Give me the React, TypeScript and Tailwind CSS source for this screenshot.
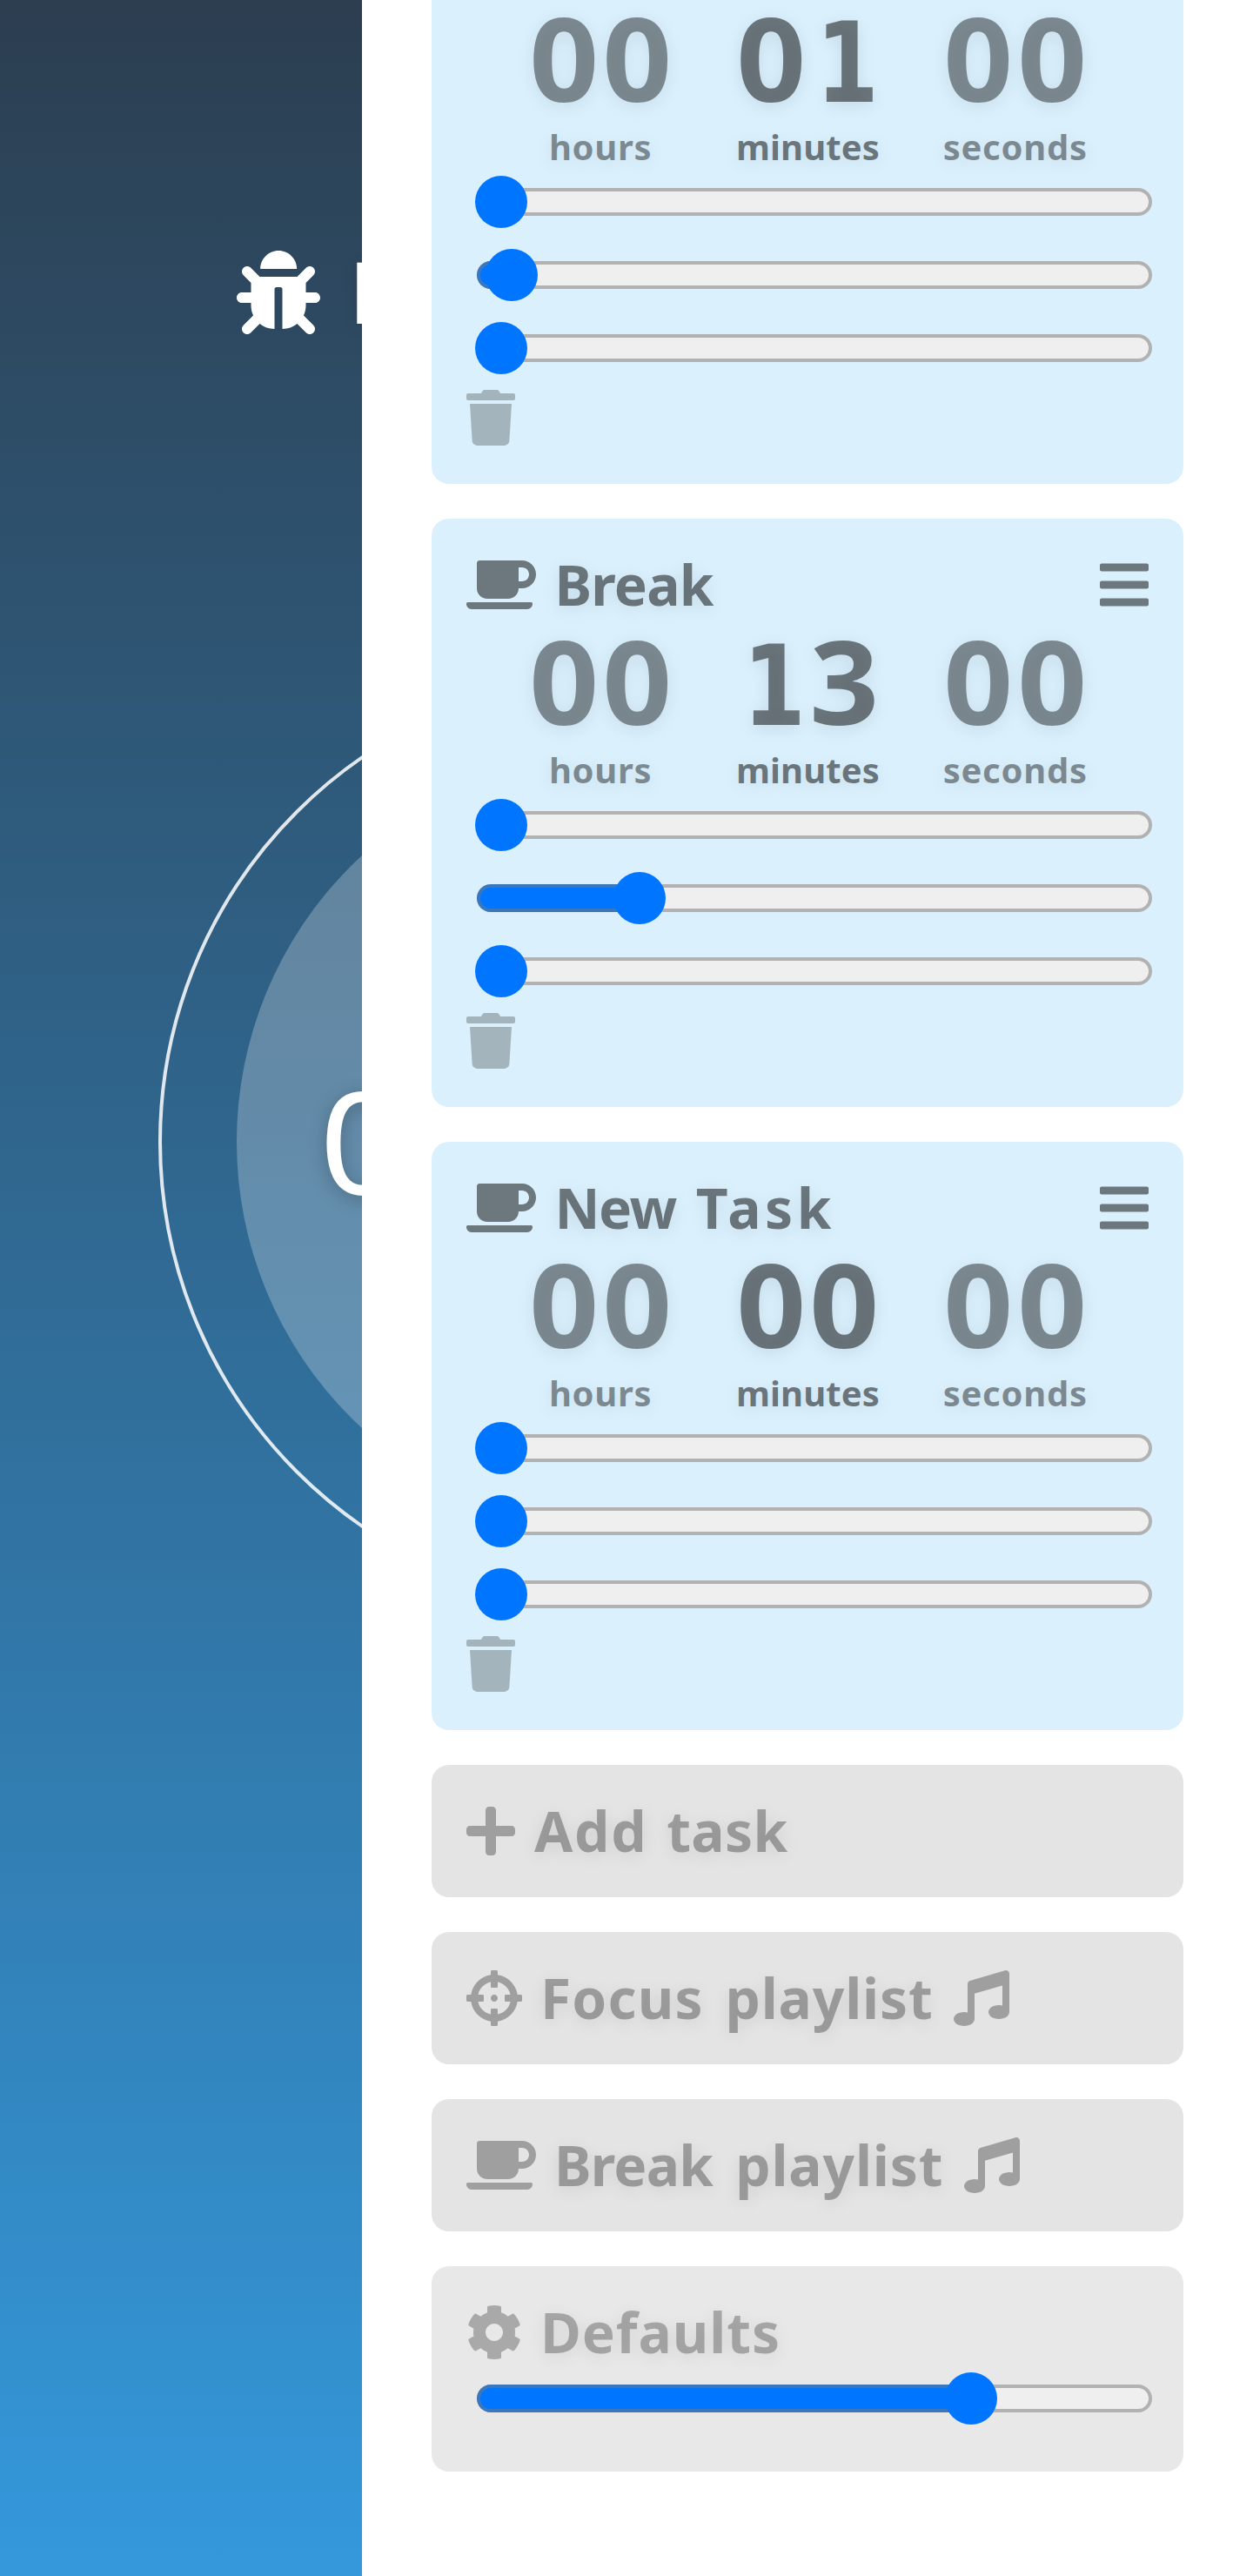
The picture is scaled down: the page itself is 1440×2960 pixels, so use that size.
import React from "react";
import { FaBars, FaBug, FaCoffee, FaCog, FaCrosshairs, FaMusic, FaPlus, FaTrash } from "react-icons/fa";

const shadow = "[text-shadow:0_4px_20px_rgba(0,0,0,0.09)]";

function Slider({ value }: { value: number }) {
  const center = 30 + value * 720;
  return (
    <div className="relative ml-[10px] flex h-[60px] w-[780px] items-center">
      <div className="ml-0.5 h-8 w-[776px] shrink-0 rounded-full border-4 border-[#b2b2b2] bg-[#efefef]" />
      {value > 0 && (
        <div
          className="absolute left-0.5 top-[14px] h-8 rounded-l-full border-4 border-r-0 border-[#3b77bd] bg-[#0075ff]"
          style={{ width: center - 2 }}
        />
      )}
      <div className="absolute top-0 size-[60px] rounded-full bg-[#0075ff]" style={{ left: center - 30 }} />
    </div>
  );
}

function Digit({ char }: { char: string }) {
  const face =
    char === "1"
      ? "font-['DejaVu_Sans_Condensed','DejaVu_Sans',sans-serif] text-[128px] scale-x-90 pl-[6px]"
      : "text-[132px] scale-x-[1.06]";
  return <span className={`w-[84.6px] text-center font-bold leading-[117px] ${face} ${shadow}`}>{char}</span>;
}

function Unit({ value, label, tracking, dim }: { value: string; label: string; tracking: string; dim?: boolean }) {
  return (
    <div className={`flex w-[238.3px] flex-col items-center text-black/50 ${dim ? "opacity-[0.83]" : ""}`}>
      <div className="flex h-32 items-baseline">
        {value.split("").map((char, i) => (
          <Digit key={i} char={char} />
        ))}
      </div>
      <span className={`mt-[13px] h-[39px] text-[40px] font-bold leading-10 ${tracking} ${shadow}`}>{label}</span>
    </div>
  );
}

function TimeEditor({ minutes, fraction }: { minutes: string; fraction: number }) {
  return (
    <>
      <div className="flex pl-[35px]">
        <Unit value="00" label="hours" tracking="tracking-[0.7px]" dim />
        <Unit value={minutes} label="minutes" tracking="tracking-[0.1px]" />
        <Unit value="00" label="seconds" tracking="tracking-[0.75px]" dim />
      </div>
      <div className="mt-[14px] flex flex-col gap-6">
        <Slider value={0} />
        <Slider value={fraction} />
        <Slider value={0} />
      </div>
      <FaTrash className="mt-[18px] h-16 w-14 text-black/25" />
    </>
  );
}

type Word = { text: string; className: string };

function Title({ words }: { words: Word[] }) {
  return (
    <h2 className={`flex h-16 items-start text-[64px] font-bold leading-[64px] ${shadow}`}>
      {words.map((w) => (
        <span key={w.text} className={w.className}>
          {w.text}
        </span>
      ))}
    </h2>
  );
}

function TaskCard({ title, minutes, fraction }: { title: Word[]; minutes: string; fraction: number }) {
  return (
    <section className="h-[676px] rounded-[20px] bg-[#daf0fd] px-10 pt-11">
      <div className="flex text-black/50">
        <FaCoffee className="h-16 w-20" />
        <div className="ml-[21.5px]">
          <Title words={title} />
        </div>
        <FaBars className="ml-auto h-16 w-14" />
      </div>
      <div className="mt-5">
        <TimeEditor minutes={minutes} fraction={fraction} />
      </div>
    </section>
  );
}

function ActionCard({ icon, gap, title, music }: { icon: React.ReactNode; gap: string; title: Word[]; music?: string }) {
  return (
    <section className="flex h-[152px] rounded-[20px] bg-[#e4e4e4] px-10 pt-11 text-black/30">
      {icon}
      <div className={gap}>
        <Title words={title} />
      </div>
      {music && <FaMusic className={`size-16 ${music}`} />}
    </section>
  );
}

export default function App() {
  return (
    <div className="flex h-[2960px] w-[1440px] overflow-hidden bg-white font-['Noto_Sans',sans-serif]">
      <aside className="relative w-[416px] shrink-0 overflow-hidden bg-linear-to-b/srgb from-[#2c3e50] to-[#3498db]">
        <div className="flex w-max pl-[272px] pt-72 text-white">
          <FaBug className="size-24" />
          <h1 className={`ml-[34px] text-[98px] font-bold leading-[92px] ${shadow}`}>P</h1>
        </div>
        <div className="absolute left-[182px] top-[774px] size-[1076px] rounded-full border-4 border-white/85" />
        <div className="absolute left-[272px] top-[864px] size-[896px] rounded-full bg-white/25">
          <span className="absolute left-24 top-[365px] w-[100px] scale-x-110 text-center text-[163px] leading-[160px] text-white [text-shadow:0_4px_20px_rgba(0,0,0,0.25)]">
            0
          </span>
        </div>
      </aside>
      <main className="flex w-[1024px] shrink-0 flex-col gap-10 px-20">
        <section className="h-[556px] rounded-b-[20px] bg-[#daf0fd] px-10 pt-2">
          <TimeEditor minutes="01" fraction={1 / 60} />
        </section>
        <TaskCard title={[{ text: "Break", className: "tracking-[-0.8px]" }]} minutes="13" fraction={13 / 59} />
        <TaskCard
          title={[
            { text: "New", className: "tracking-[-1.5px]" },
            { text: "Task", className: "ml-[23px] tracking-[4.6px]" },
          ]}
          minutes="00"
          fraction={0}
        />
        <ActionCard
          icon={<FaPlus className="h-16 w-14" />}
          gap="ml-[22px]"
          title={[
            { text: "Add", className: "tracking-[1.7px]" },
            { text: "task", className: "ml-[22px] tracking-[0.3px]" },
          ]}
        />
        <ActionCard
          icon={<FaCrosshairs className="size-16" />}
          gap="ml-[21px]"
          title={[
            { text: "Focus", className: "tracking-[1.2px]" },
            { text: "playlist", className: "ml-[24.5px] tracking-[0.85px]" },
          ]}
          music="ml-[23px]"
        />
        <ActionCard
          icon={<FaCoffee className="h-16 w-20" />}
          gap="ml-[21px]"
          title={[
            { text: "Break", className: "tracking-[-0.8px]" },
            { text: "playlist", className: "ml-[26px] tracking-[0.85px]" },
          ]}
          music="ml-[24px]"
        />
        <section className="h-[236px] rounded-[20px] bg-[#e8e8e8] px-10 pt-11 text-black/[0.27]">
          <div className="flex">
            <FaCog className="size-16" />
            <div className="ml-[21px]">
              <Title words={[{ text: "Defaults", className: "tracking-[0.9px]" }]} />
            </div>
          </div>
          <div className="mt-[14px]">
            <Slider value={0.75} />
          </div>
        </section>
      </main>
    </div>
  );
}
